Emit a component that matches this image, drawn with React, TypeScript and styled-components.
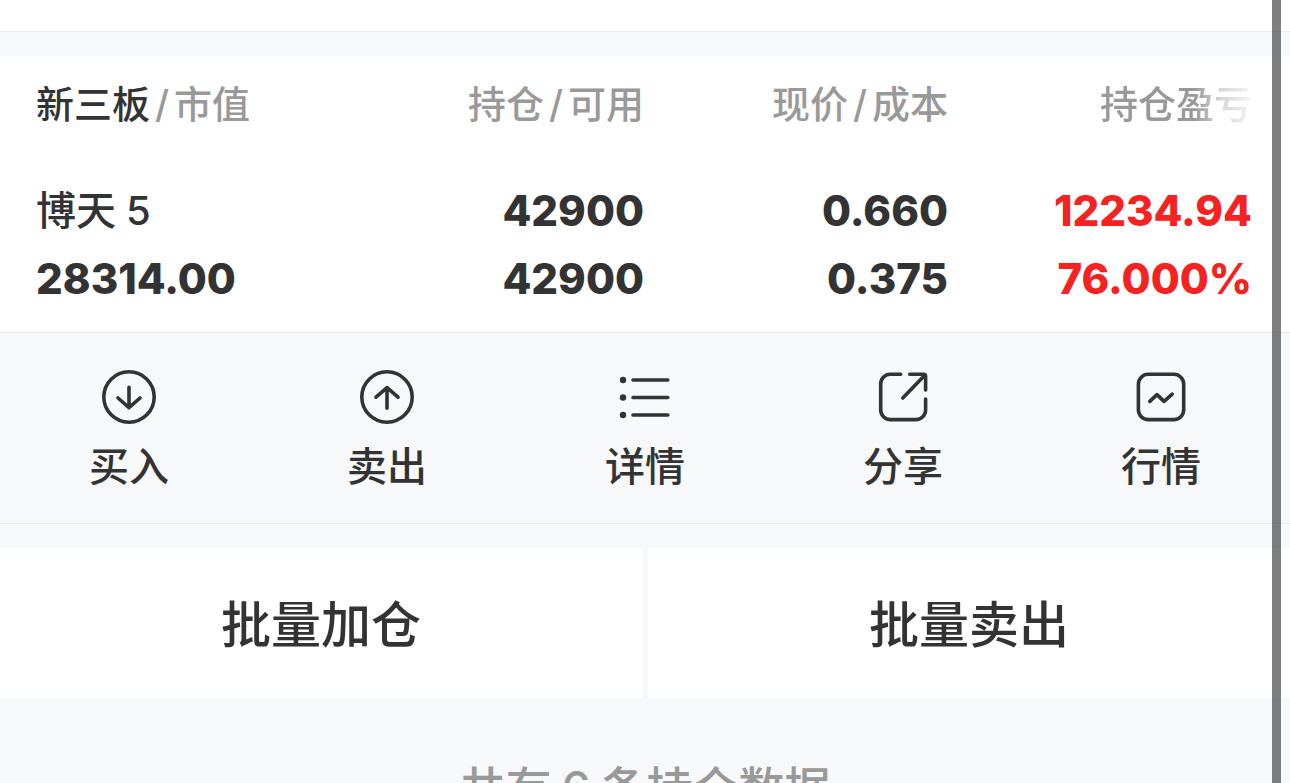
import React from "react";
import styled, { createGlobalStyle } from "styled-components";

const GlobalStyle = createGlobalStyle`
  * { box-sizing: border-box; }
  html { scrollbar-width: none; }
  body {
    margin: 0;
    background: #f7f8fa;
    color: #333333;
    font-family: Inter, "Noto Sans CJK SC", sans-serif;
    font-weight: 500;
  }
  button {
    border: 0;
    padding: 0;
    color: inherit;
    font: inherit;
    cursor: pointer;
  }
`;

const TopStrip = styled.div`
  height: 32px;
  background: #ffffff;
  border-bottom: 1px solid #ebebeb;
`;

const Holdings = styled.section`
  margin-top: 24px;
  padding: 20px 38px 19px 36px;
  background: #ffffff;
`;

const HoldingsTable = styled.table`
  width: 100%;
  table-layout: fixed;
  border-collapse: collapse;
`;

const HeadCell = styled.th<{ $first?: boolean; $width: string }>`
  width: ${(p) => p.$width};
  height: 56px;
  padding: 0;
  text-align: ${(p) => (p.$first ? "left" : "right")};
  vertical-align: middle;
  white-space: nowrap;
  font-size: 38px;
  line-height: 56px;
  font-weight: 500;
  color: #999999;
`;

const Strong = styled.span`
  color: #333333;
`;

const Slash = styled.span`
  margin: 0 5px;
`;

const Faded = styled.span`
  display: inline-block;
  mask-image: linear-gradient(to right, #000 62%, rgba(0, 0, 0, 0.4) 80%, rgba(0, 0, 0, 0.1) 100%);
`;

const Cell = styled.td<{ $first?: boolean; $rise?: boolean }>`
  padding: 45px 0 0;
  text-align: ${(p) => (p.$first ? "left" : "right")};
  white-space: nowrap;
  font-size: 42px;
  line-height: 68px;
  font-weight: 800;
  font-variation-settings: "opsz" 14;
  color: ${(p) => (p.$rise ? "#f52222" : "#333333")};
`;

const Line = styled.div`
  height: 68px;
`;

const StockName = styled.div`
  height: 68px;
  font-size: 40px;
  font-weight: 500;
`;

const Actions = styled.nav`
  display: grid;
  grid-template-columns: repeat(5, 1fr);
  padding: 34px 0 27px;
  border-top: 1px solid #ebebeb;
  border-bottom: 1px solid #ebebeb;
`;

const ActionButton = styled.button`
  display: flex;
  flex-direction: column;
  align-items: center;
  gap: 11px;
  background: transparent;
  font-size: 40px;
  line-height: 58px;
`;

const Icon = styled.svg`
  display: block;
  width: 60px;
  height: 60px;
  fill: none;
  stroke: #333333;
  stroke-width: 3.6;
  stroke-linecap: round;
  stroke-linejoin: round;
`;

const Batch = styled.div`
  display: grid;
  grid-template-columns: 1fr 1fr;
  gap: 6px;
  margin-top: 24px;
`;

const BatchButton = styled.button`
  height: 150px;
  padding-top: 4px;
  background: #ffffff;
  font-size: 50px;
  line-height: 72px;
`;

const Summary = styled.p`
  margin: 0;
  padding: 56px 0;
  text-align: center;
  font-size: 46px;
  line-height: 68px;
  color: #999999;
`;

const Count = styled.span`
  margin: 0 10px;
`;

const EdgeBar = styled.div`
  position: fixed;
  top: 0;
  bottom: 0;
  right: 9px;
  width: 9px;
  background: rgba(0, 0, 0, 0.5);
`;

const actions = [
  {
    label: "买入",
    icon: (
      <>
        <circle cx="30" cy="30" r="25.2" />
        <path d="M30 20.3V40.6M19 31L30 40.6L41 31" />
      </>
    ),
  },
  {
    label: "卖出",
    icon: (
      <>
        <circle cx="30" cy="30" r="25.2" />
        <path d="M30 41.3V20.6M19 30.2L30 20.6L41 30.2" />
      </>
    ),
  },
  {
    label: "详情",
    icon: (
      <>
        <g fill="#333333" stroke="none">
          <circle cx="8" cy="13" r="3.2" />
          <circle cx="8" cy="30.5" r="3.2" />
          <circle cx="8" cy="48" r="3.2" />
        </g>
        <path d="M18 13H52.8M18 30.5H52.8M18 48H52.8" />
      </>
    ),
  },
  {
    label: "分享",
    icon: (
      <>
        <path d="M27.7 7.3H17.3A9.6 9.6 0 0 0 7.7 16.9V43A9.6 9.6 0 0 0 17.3 52.6H43A9.6 9.6 0 0 0 52.6 43V32" />
        <path d="M36.7 7.3H50.6A2 2 0 0 1 52.6 9.3V23M51.5 8.5L29.8 31" />
      </>
    ),
  },
  {
    label: "行情",
    icon: (
      <>
        <rect x="7.4" y="7.3" width="45.3" height="45.3" rx="9.8" />
        <path d="M18.8 34.4L26 27.6L33 34.4L41.2 27.2" />
      </>
    ),
  },
];

export default function App() {
  return (
    <>
      <GlobalStyle />
      <TopStrip />
      <main>
        <Holdings>
          <HoldingsTable>
            <thead>
              <tr>
                <HeadCell $first $width="25%">
                  <Strong>新三板</Strong>
                  <Slash>/</Slash>市值
                </HeadCell>
                <HeadCell $width="25%">
                  持仓<Slash>/</Slash>可用
                </HeadCell>
                <HeadCell $width="25%">
                  现价<Slash>/</Slash>成本
                </HeadCell>
                <HeadCell $width="25%">
                  <Faded>持仓盈亏</Faded>
                </HeadCell>
              </tr>
            </thead>
            <tbody>
              <tr>
                <Cell $first>
                  <StockName>
                    博天<Count>5</Count>
                  </StockName>
                  <Line>28314.00</Line>
                </Cell>
                <Cell>
                  <Line>42900</Line>
                  <Line>42900</Line>
                </Cell>
                <Cell>
                  <Line>0.660</Line>
                  <Line>0.375</Line>
                </Cell>
                <Cell $rise>
                  <Line>12234.94</Line>
                  <Line>76.000%</Line>
                </Cell>
              </tr>
            </tbody>
          </HoldingsTable>
        </Holdings>
        <Actions>
          {actions.map((a) => (
            <ActionButton key={a.label} type="button">
              <Icon viewBox="0 0 60 60" aria-hidden="true">
                {a.icon}
              </Icon>
              {a.label}
            </ActionButton>
          ))}
        </Actions>
        <Batch>
          <BatchButton type="button">批量加仓</BatchButton>
          <BatchButton type="button">批量卖出</BatchButton>
        </Batch>
        <Summary>
          共有<Count>6</Count>条持仓数据
        </Summary>
      </main>
      <EdgeBar />
    </>
  );
}
